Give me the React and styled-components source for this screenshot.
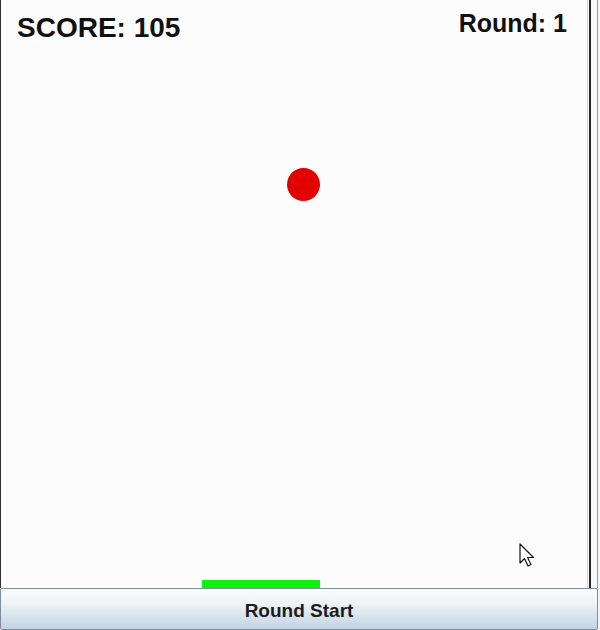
import React from "react";
import styled, { createGlobalStyle } from "styled-components";

const GlobalStyle = createGlobalStyle`
  html, body {
    margin: 0;
    padding: 0;
    background: #f4f4f4;
  }
  body {
    font-family: "Liberation Sans", Arial, sans-serif;
  }
`;

const Frame = styled.div`
  width: 600px;
  height: 630px;
  display: flex;
  flex-direction: column;
  overflow: hidden;
`;

const Top = styled.div`
  display: flex;
  height: 588px;
`;

const Board = styled.div`
  width: 591px;
  box-sizing: border-box;
  border-left: 1px solid #2e2e2e;
  border-right: 2px solid #262626;
  padding-right: 1px;
  background: #fdfcfd;
`;

const Field = styled.div`
  position: relative;
  height: 100%;
  box-sizing: border-box;
  border-right: 1px solid #d2d2d2;
  background: #fdfcfd;
`;

const Edge = styled.div`
  flex: 1;
  background: #f6f6f6;
  border-right: 1px solid #9c9c9c;
  margin-right: 2px;
`;

const Hud = styled.div`
  display: flex;
  justify-content: space-between;
  align-items: flex-start;
  padding: 11px 20px 0 16px;
`;

const Label = styled.div`
  font-weight: bold;
  color: #111;
  font-size: ${(p) => p.size}px;
  line-height: 1;
  margin-top: ${(p) => p.top || 0}px;
`;

const Ball = styled.div`
  position: absolute;
  width: 33px;
  height: 33px;
  border-radius: 50%;
  background: #e20000;
`;

const Paddle = styled.div`
  position: absolute;
  bottom: 0;
  height: 8px;
  background: #10f010;
`;

const Cursor = styled.svg`
  position: absolute;
`;

const StartButton = styled.button`
  height: 42px;
  width: 598px;
  box-sizing: border-box;
  margin: 0;
  border: 1px solid #7e8c9b;
  border-radius: 2px;
  background: linear-gradient(to bottom, #fbfcfd 0%, #eef3f7 35%, #d9e4ee 65%, #c3d4e5 100%);
  font-family: "Liberation Sans", Arial, sans-serif;
  font-weight: bold;
  font-size: 19px;
  color: #1c1c1c;
  padding: 4px 0 0;
  cursor: pointer;
`;

export default function App() {
  const ball = { x: 303, y: 185 };
  const paddle = { x: 201, w: 118 };

  return (
    <>
      <GlobalStyle />
      <Frame>
        <Top>
          <Board>
            <Field>
              <Hud>
                <Label size={28} top={3}>SCORE: 105</Label>
                <Label size={25}>Round: 1</Label>
              </Hud>
              <Ball style={{ left: ball.x - 17, top: ball.y - 17 }} />
              <Paddle style={{ left: paddle.x, width: paddle.w }} />
              <Cursor
                style={{ left: 518, top: 543 }}
                width="20"
                height="28"
                viewBox="0 0 20 28"
              >
                <path
                  d="M1 1 L1 20 L5.5 15.5 L9 23 L12 21.5 L8.5 14.5 L14.5 14.5 Z"
                  fill="#fff"
                  stroke="#111"
                  strokeWidth="1.2"
                  strokeLinejoin="round"
                />
              </Cursor>
            </Field>
          </Board>
          <Edge />
        </Top>
        <StartButton>Round Start</StartButton>
      </Frame>
    </>
  );
}
